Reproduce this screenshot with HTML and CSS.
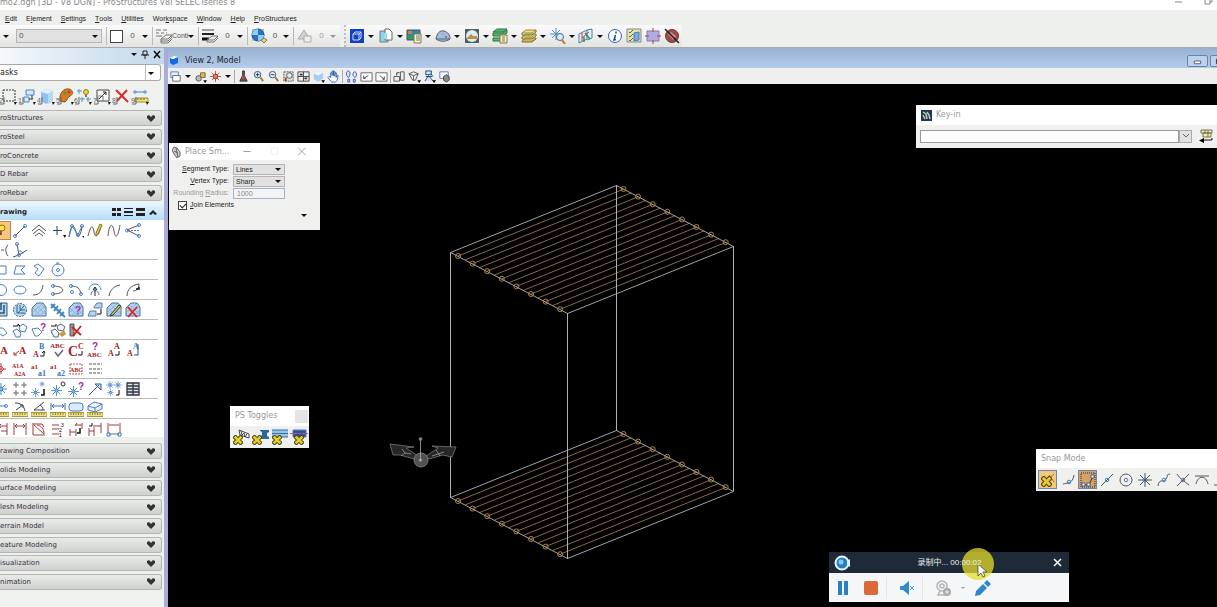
FILE: index.html
```html
<!DOCTYPE html>
<html lang="en">
<head>
<meta charset="utf-8">
<title>ProStructures</title>
<link rel="stylesheet" href="styles.css">
</head>
<body>
<svg class="defs" aria-hidden="true">
  <symbol id="chev" viewBox="0 0 8 7"><path d="M0 1l2-1 2 2 2-2 2 1v2l-4 4-4-4z" fill="#333"/></symbol>
  <symbol id="cross" viewBox="0 0 10 10"><path d="M2.500 2.500l5 5m0-5l-5 5" stroke="#4a4208" stroke-width="4.500" stroke-linecap="square"/><path d="M2.500 2.500l5 5m0-5l-5 5" stroke="#e3cb31" stroke-width="2.600" stroke-linecap="square"/></symbol>
  <symbol id="star" viewBox="0 0 12 12"><path d="M6 0v12M0 6h12M2 2l8 8m0-8l-8 8" stroke="#4a86c4" stroke-width="1"/><circle cx="6" cy="6" r="1.800" fill="#8cc4ee" stroke="#3a78b8"/></symbol>
  <symbol id="rule" viewBox="0 0 16 5"><path d="M0 .5h16v4H0z" fill="#efe08a" stroke="#a89630"/><path d="M3 1v2m2.500-2v2M8 1v2m2.500-2v2M13 1v2" stroke="#76691f" stroke-width=".8"/></symbol>
  <symbol id="patch" viewBox="0 0 16 16"><path d="M1 14V6l5-5h6l3 4v9z" fill="#b4d4ee" stroke="#446f9c"/><path d="M2 6l8 8M5 3l10 10M9 1l6 6M2 10l9-8M3 14L14 4M8 14l7-6" stroke="#83b0d8" stroke-width=".8"/></symbol>
  <symbol id="slab" viewBox="0 0 16 14"><path d="M1 4l4-3h10l-4 3zM1 8l4-3h10l-4 3zM1 12l4-3h10l-4 3z" fill="#efe08a" stroke="#a08d30"/><path d="M1 4v2h10l4-3V1M1 8v2h10l4-3V5M1 12v1h10l4-3V9" fill="none" stroke="#7c6a20"/></symbol>
</svg>

<header class="titlebar"><span>mo2.dgn [3D - V8 DGN] - ProStructures V8i SELECTseries 8</span><svg class="winctl" viewBox="0 0 40 10"><path d="M1 2h7M31 0v4h5V0M36 2h2V0" fill="none" stroke="#888"/></svg></header>
<nav class="menubar">
  <button><u>E</u>dit</button><button>E<u>l</u>ement</button><button><u>S</u>ettings</button><button><u>T</u>ools</button><button><u>U</u>tilities</button><button>Wor<u>k</u>space</button><button><u>W</u>indow</button><button><u>H</u>elp</button><button><u>P</u>roStructures</button>
</nav>

<div class="toolbar">
  <div class="attrs">
    <button class="first" aria-label="Template"><i class="ar"></i></button>
    <label class="combo level"><select aria-label="Level"><option>0</option></select></label>
    <button class="attr color"><span class="swatch"></span><span>0</span><i class="ar"></i></button>
    <button class="attr style"><svg class="i" viewBox="0 0 16 16"><path d="M0 2h5m2 0h4M0 5h3m2 0h3m2 0h1M0 8h6" stroke="#777"/><path d="M5 11l5-4h6l-4 4zM5 11v2h7l4-4V7" fill="#eee" stroke="#777"/><path d="M5 13v2h7l4-4" fill="none" stroke="#777"/></svg><span>Conti</span><i class="ar"></i></button>
    <button class="attr weight"><svg class="i" viewBox="0 0 16 16"><path d="M0 2h12" stroke="#444"/><path d="M0 6h12" stroke="#222" stroke-width="2"/><path d="M0 11h7" stroke="#111" stroke-width="3"/><path d="M5 12l5-4h6l-4 4zM5 12v2h7l4-4V8" fill="#eee" stroke="#777"/></svg><span>0</span><i class="ar"></i></button>
    <button class="attr globe"><svg class="i" viewBox="0 0 16 16"><path d="M1 1h12v12H1z" fill="#bbb"/><circle cx="7" cy="7" r="6" fill="#2c71c8" stroke="#244f91"/><path d="M7 1a6 6 0 0 0-6 6h6zM7 13a6 6 0 0 0 6-6H7z" fill="#8fd0f5"/><path d="M10 12l3-2 3 2-3 3z" fill="#e7d75c" stroke="#777"/></svg><span>0</span><i class="ar"></i></button>
    <button class="attr prio"><svg class="i" viewBox="0 0 16 16"><path d="M1 11l6-9 6 9z" fill="#d2d2d2" stroke="#aaa"/><path d="M7 8h7v6H7z" fill="#eee" stroke="#aaa"/></svg><span>0</span><i class="ar dim"></i></button>
  </div>
  <div class="primary">
    <div class="pairs">
      <button aria-label="Models"><svg class="i" viewBox="0 0 16 16"><path d="M1 1h14v14H1z" fill="#123fc4"/><path d="M4 6l2-2h6v6l-2 2H4zM4 6h6v6M10 6l2-2" fill="none" stroke="#cfe0ff"/></svg><i class="ar"></i></button>
      <button aria-label="References"><svg class="i" viewBox="0 0 16 16"><path d="M2 3h8v11H2z" fill="#8ed4e8" stroke="#777"/><path d="M7 1h4l3 3v8H7z" fill="#fff" stroke="#666"/><path d="M6 5h3v6H6z" fill="#9adcf0"/></svg><i class="ar"></i></button>
      <button aria-label="Raster manager"><svg class="i" viewBox="0 0 16 16"><path d="M1 2h13v10H1z" fill="#2389b5" stroke="#555"/><path d="M2 3h4v3H2z" fill="#e57a35"/><path d="M2 8h6v3H2z" fill="#33a04c"/><path d="M8 6h7v9H8z" fill="#fff3b8" stroke="#777"/><path d="M10 8h4m-4 2h4m-4 2h4" stroke="#777"/></svg><i class="ar"></i></button>
      <button aria-label="Point clouds"><svg class="i" viewBox="0 0 16 16"><path d="M1 11c1-6 4-9 8-8s6 4 6 8c-4 3-10 3-14 0z" fill="#98c4dc" stroke="#657"/><path d="M1 11h14" stroke="#567"/><circle cx="8" cy="6" r="1.500" fill="#e696b6"/><circle cx="11" cy="9" r="1" fill="#735cae"/></svg><i class="ar"></i></button>
      <button aria-label="Saved views"><svg class="i" viewBox="0 0 16 16"><path d="M1 1h14v14H1z" fill="#545e66"/><circle cx="8" cy="8" r="6" fill="#dcecf4"/><path d="M3 10l4-4 2 2h4v3H3z" fill="#c28c43"/></svg><i class="ar"></i></button>
      <button aria-label="Level manager"><svg class="i" viewBox="0 0 16 16"><path d="M1 4l4-3h10l-4 3zM1 5v3h10l4-3V2l-4 3zM1 10v3h8v-3z" fill="#58b966" stroke="#267548"/><path d="M8 7h7v8H8z" fill="#fff2aa" stroke="#776"/><path d="M10 9h3m-3 2h3m-3 2h3" stroke="#776"/></svg><i class="ar"></i></button>
      <button aria-label="Level display"><svg class="i" viewBox="0 0 16 14"><use href="#slab"/></svg><i class="ar"></i></button>
      <button aria-label="Element information"><svg class="i" viewBox="0 0 16 16"><path d="M6 0v12M0 6h12M2 2l8 8m0-8l-8 8" stroke="#4a90ce"/><circle cx="10" cy="9" r="3.500" fill="#d6efff" stroke="#567"/><path d="M12 12l3 4" stroke="#c07824" stroke-width="2"/></svg><i class="ar"></i></button>
      <button aria-label="AccuDraw"><svg class="i" viewBox="0 0 16 16"><path d="M1 6l8-4v9l-8 4zM9 2l5-1v9l-5 2" fill="#e4f1fb" stroke="#4d7bb5"/><path d="M4 13V5m0 5l7-6" stroke="#c33"/><path d="M7 5l5 6M6 9v5" stroke="#2c974a" stroke-width="1.500"/></svg><i class="ar"></i></button>
    </div>
    <div class="singles">
      <button aria-label="Information"><svg class="i" viewBox="0 0 16 16"><circle cx="8" cy="8" r="6.500" fill="#fff" stroke="#3266bb"/><path d="M9 3.500v2M8.500 7L7 12l2-.5" fill="none" stroke="#1648a5" stroke-width="1.500"/></svg></button>
      <button aria-label="Toggle"><svg class="i" viewBox="0 0 16 16"><path d="M1 1h14v13H1z" fill="#e7e0b8" stroke="#888"/><path d="M8 5l5-1v8l-5 1z" fill="#75a9e4" stroke="#5376ad"/><path d="M3 4l1 1 3-3M3 8l1 1 3-3M3 12l1 1 3-3" fill="none" stroke="#557427"/></svg></button>
      <button aria-label="Explorer"><svg class="i" viewBox="0 0 16 16"><path d="M2 3h12v10H2z" fill="#b7a9df" stroke="#7780b4"/><path d="M8 0v4M8 12v4M0 8h4M12 8h4" stroke="#d03030"/><path d="M5 5h6v6H5z" fill="#a9aee2"/></svg></button>
      <button aria-label="Stop"><svg class="i" viewBox="0 0 16 16"><circle cx="8" cy="8" r="6.500" fill="#a14848" stroke="#703535"/><path d="M4 6l3-2 5 4-3 4z" fill="#ca8e8e"/><path d="M1 1l14 14" stroke="#222" stroke-width="1.500"/></svg></button>
    </div>
  </div>
</div>

<main class="work">
<aside class="tasks">
  <div class="pane-title"><i class="ar"></i><svg viewBox="0 0 8 9"><path d="M2 1h4v4H2zM0 5h8M4 5v4" fill="none" stroke="#222"/></svg><svg viewBox="0 0 8 9"><path d="M1 1l6 7m0-7L1 8" stroke="#111" stroke-width="1.600"/></svg></div>
  <label class="task-combo"><select aria-label="Tasks"><option>asks</option></select></label>
  <div class="task-tools">
    <button aria-label="Select"><svg viewBox="0 0 18 18"><path d="M4 2h12v11H4z" fill="none" stroke="#333" stroke-dasharray="2 1"/><text x="0" y="15">2</text><path d="M5 9v7H1"/><path d="M15 14h3l-2 3z" fill="#111"/></svg></button>
    <button aria-label="Fence"><svg viewBox="0 0 18 18"><path d="M8 2h8v5H8zM6 9h5v5H6z" fill="#d3e9fb" stroke="#4888c8"/><path d="M14 7v4M11 11h4"  stroke="#333"/><text x="0" y="15">1</text><path d="M5 9v7H1"/><path d="M15 14h3l-2 3z" fill="#111"/></svg></button>
    <button aria-label="Solids"><svg viewBox="0 0 18 18"><path d="M4 4l5-3 7 2v10l-7 3-5-3z" fill="#8fc2ee"/><path d="M4 4l5-3 7 2-5 3z" fill="#dff0ff"/><path d="M11 6l5-3v10l-5 3z" fill="#b9d8f5"/><text x="0" y="15">4</text><path d="M5 9v7H1"/><path d="M15 14h3l-2 3z" fill="#111"/></svg></button>
    <button aria-label="Change attributes"><svg viewBox="0 0 18 18"><path d="M4 13C3 6 7 0 13 1c5 1 4 6 1 7s-2 4-5 6z" fill="#d77b21" stroke="#8b501a"/><circle cx="9" cy="5" r="1.500" fill="#46a04a"/><circle cx="13" cy="4" r="1.500" fill="#d33"/><text x="0" y="15">5</text><path d="M5 9v7H1"/><path d="M15 14h3l-2 3z" fill="#111"/></svg></button>
    <button aria-label="Groups"><svg viewBox="0 0 18 18"><path d="M5 1v5M3 3h5M8 9v5M6 11h5M14 9v5M12 11h5" stroke="#5a92cc"/><circle cx="12" cy="4" r="2.500" fill="#f0cc42" stroke="#9a7d25"/><path d="M11 7h2v2h-2z" fill="#777"/><text x="0" y="15">6</text><path d="M5 9v7H1"/><path d="M15 14h3l-2 3z" fill="#111"/></svg></button>
    <button aria-label="Manipulate"><svg viewBox="0 0 18 18"><path d="M4 2h12v11H4z" fill="#fff" stroke="#444"/><path d="M6 11l7-7M10 4h3v3" fill="none" stroke="#222"/><path d="M5 8h5v5" fill="none" stroke="#777"/><text x="0" y="15">7</text><path d="M5 9v7H1"/><path d="M15 14h3l-2 3z" fill="#111"/></svg></button>
    <button aria-label="Delete"><svg viewBox="0 0 18 18"><path d="M4 2l12 12M15 2L5 13" stroke="#d43028" stroke-width="2"/><text x="0" y="15">8</text><path d="M5 9v7H1"/></svg></button>
    <button aria-label="Measure"><svg viewBox="0 0 18 18"><path d="M5 4h10" stroke="#4c88c8"/><path d="M3 3h2v2H3zM13 3h2v2h-2z" fill="#fff" stroke="#4c88c8"/><path d="M4 10h13v4H4z" fill="#efdf7c" stroke="#a3922f"/><path d="M7 10v2m3-2v2m3-2v2" stroke="#665"/><text x="0" y="15">9</text><path d="M5 9v7H1"/><path d="M15 14h3l-2 3z" fill="#111"/></svg></button>
  </div>
  <div class="panels upper">
    <button class="panel">roStructures<svg><use href="#chev"/></svg></button>
    <button class="panel">roSteel<svg><use href="#chev"/></svg></button>
    <button class="panel">roConcrete<svg><use href="#chev"/></svg></button>
    <button class="panel">D Rebar<svg><use href="#chev"/></svg></button>
    <button class="panel">roRebar<svg><use href="#chev"/></svg></button>
  </div>
  <div class="drawing-head"><span>rawing</span><svg viewBox="0 0 46 10"><path d="M1 1h4v3H1zM6 1h4v3H6zM1 6h4v3H1zM6 6h4v3H6zM13 1h9v1h-9zM13 4h9v2h-9zM13 8h9v1h-9zM25 1h9v3h-9zM25 6h9v3h-9z" fill="#222"/><path d="M38 7l4-4 4 4-2 1-2-2-2 2z" fill="#222"/></svg></div>
  <div class="drawing-tools">
    <div class="grp">
      <button class="sel" aria-label="SmartLine"><svg viewBox="0 0 16 16"><circle cx="9" cy="5" r="3" fill="#ffe24a" stroke="#a67012"/><path d="M8 8v4M4 14l4-4" stroke="#644" stroke-width="1.500"/></svg></button>
      <button aria-label="Line"><svg viewBox="0 0 16 16"><path d="M3 13L13 3" class="k"/><circle cx="3" cy="13" r="1.500" class="b"/><circle cx="13" cy="3" r="1.500" class="b"/></svg></button>
      <button aria-label="Multi-line"><svg viewBox="0 0 16 16"><path d="M1 8l7-6 7 6M2 11l6-5 6 5M4 13l4-3 4 3" class="k"/></svg></button>
      <button aria-label="Point"><svg viewBox="0 0 16 16"><path d="M7 3v9M3 7.500h9" stroke="#246"/><path d="M13 12h3l-1 3z"/></svg></button>
      <button aria-label="Curve"><svg viewBox="0 0 16 16"><path d="M1 14C3 0 6 1 8 9s5 3 6-6" class="k"/><path d="M1 14L4 3l6 9 4-9" class="b"/><circle cx="4" cy="3" r="1.500" class="b"/><circle cx="14" cy="3" r="1.500" class="b"/><circle cx="10" cy="12" r="1.500" class="b"/><path d="M14 13h2v2z"/></svg></button>
      <button aria-label="Freehand"><svg viewBox="0 0 16 16"><path d="M1 13C4 1 6 2 7 9s5 4 7-6" class="k"/><path d="M9 10l4-9 2 1-4 9-2 2z" fill="#efcf4a" stroke="#886b20"/></svg></button>
      <button aria-label="Stream curve"><svg viewBox="0 0 16 16"><path d="M2 13C3 0 7 0 8 8s4 7 6-6" class="k"/></svg></button>
      <button aria-label="Bisector"><svg viewBox="0 0 16 16"><path d="M14 2L2 7l12 6" class="k"/><path d="M3 7.500h12" class="b" stroke-dasharray="2 1"/><circle cx="2" cy="7.500" r="1.500" class="b"/><circle cx="14" cy="2" r="1.500" class="b"/><circle cx="14" cy="13" r="1.500" class="b"/></svg></button>
      <button aria-label="Minimum line"><svg viewBox="0 0 16 16"><path d="M8 8h3M15 3c-3 3-3 7 0 11" class="k"/></svg></button>
      <button aria-label="Angle line"><svg viewBox="0 0 16 16"><path d="M5 2l2 11 8-5M1 15l6-2" class="k"/><path d="M7 9c3 0 3 1 4 3" class="b"/><circle cx="5" cy="2" r="1.500" class="b"/><circle cx="7" cy="13" r="1.500" class="b"/></svg></button>
    </div>
    <div class="grp">
      <button aria-label="Block"><svg viewBox="0 0 16 16"><path d="M1 4h12v8H1z" class="b"/></svg></button>
      <button aria-label="Shape"><svg viewBox="0 0 16 16"><path d="M2 12l2-8h9l-4 4 4 4z" class="b"/></svg></button>
      <button aria-label="Orthogonal shape"><svg viewBox="0 0 16 16"><path d="M3 4l4-2 6 5-5 7-4-3 3-4z" class="b"/></svg></button>
      <button aria-label="Polygon"><svg viewBox="0 0 16 16"><circle cx="8" cy="8" r="6" class="b"/><circle cx="8" cy="8" r="1.500" class="b"/><path d="M6 1h3" class="b"/></svg></button>
    </div>
    <div class="grp">
      <button aria-label="Circle"><svg viewBox="0 0 16 16"><circle cx="8" cy="8" r="5.500" class="b"/></svg></button>
      <button aria-label="Ellipse"><svg viewBox="0 0 16 16"><ellipse cx="8" cy="8" rx="6" ry="4" class="b"/></svg></button>
      <button aria-label="Arc"><svg viewBox="0 0 16 16"><path d="M2 13c6 0 9-3 10-10" class="k"/></svg></button>
      <button aria-label="Half ellipse"><svg viewBox="0 0 16 16"><path d="M3 4c13 0 13 8 0 8" class="k"/><circle cx="3" cy="4" r="1.500" class="b"/><circle cx="3" cy="12" r="1.500" class="b"/></svg></button>
      <button aria-label="Quarter ellipse"><svg viewBox="0 0 16 16"><path d="M3 4c7 0 9 3 10 8" class="k"/><circle cx="3" cy="4" r="1.500" class="b"/><circle cx="13" cy="12" r="1.500" class="b"/><circle cx="4" cy="10" r="1.500" class="b"/></svg></button>
      <button aria-label="Modify arc radius"><svg viewBox="0 0 16 16"><path d="M2 8c1-8 11-8 12 0M4 13c0-6 8-6 8 0" class="b"/><path d="M8 14V6M6 8l2-3 2 3" fill="none" stroke="#222"/></svg></button>
      <button aria-label="Modify arc angle"><svg viewBox="0 0 16 16"><path d="M3 14C4 8 8 4 14 3" class="k"/></svg></button>
      <button aria-label="Modify arc axis"><svg viewBox="0 0 16 16"><path d="M2 14C2 8 6 3 14 2c0 5-3 7-6 7" class="k"/><path d="M11 7h3V5" fill="none" stroke="#111" stroke-width="1.500"/></svg></button>
    </div>
    <div class="grp">
      <button aria-label="Hatch"><svg viewBox="0 0 16 16"><path d="M1 1h13v13H1z" fill="#b9d8f0" stroke="#28557b"/><path d="M4 1v10h7V3M8 1v7" fill="none" stroke="#28557b" stroke-width="1.500"/></svg></button>
      <button aria-label="Crosshatch"><svg viewBox="0 0 16 16"><circle cx="8" cy="8" r="6.500" fill="#bad8ee" stroke="#2b6192" stroke-dasharray="2 1"/><path d="M5 3v8h8M8 3v5h5M6 11l6-7" fill="none" stroke="#2b6192"/></svg></button>
      <button aria-label="Pattern area"><svg><use href="#patch"/></svg></button>
      <button aria-label="Linear pattern"><svg viewBox="0 0 16 16"><path d="M1 2l14 13M1 6l4-4M4 9l4-5M7 12l4-5M10 14l4-4" stroke="#4387bf" stroke-width="2"/></svg></button>
      <button aria-label="Show pattern"><svg viewBox="0 0 16 16"><use href="#patch"/><text x="7" y="12" class="q">?</text></svg></button>
      <button aria-label="Match pattern"><svg viewBox="0 0 16 16"><path d="M7 5l3-4h5v5H7zM1 14l2-5h6v5z" fill="#b8d3ec" stroke="#557ea8"/><path d="M14 7v5h-4" fill="none" stroke="#111"/></svg></button>
      <button aria-label="Change pattern"><svg viewBox="0 0 16 16"><use href="#patch"/><path d="M5 12l8-9 2 1-8 9-3 1z" fill="#dfc45d" stroke="#333"/></svg></button>
      <button aria-label="Delete pattern"><svg viewBox="0 0 16 16"><use href="#patch"/><path d="M3 5l9 10M12 5L3 15" stroke="#d22" stroke-width="1.800"/></svg></button>
    </div>
    <div class="grp">
      <button aria-label="Place tag"><svg viewBox="0 0 16 16"><path d="M4 6h6l4 5-4 3-6-4z" class="b"/></svg></button>
      <button aria-label="Attach tag"><svg viewBox="0 0 16 16"><path d="M1 9l4-2 4 4-1 4H4zM7 5l4-3 4 3-2 5-5-1z" fill="#eef7ff" stroke="#567ba5"/><path d="M1 4h5V2l2 2" fill="none" stroke="#111"/></svg></button>
      <button aria-label="Review tag"><svg viewBox="0 0 16 16"><path d="M1 7l6-1 4 4-4 4H4z" class="b"/><text x="9" y="9" class="q">?</text></svg></button>
      <button aria-label="Change tag"><svg viewBox="0 0 16 16"><path d="M1 9l4-2 4 4-1 4H4zM7 4l4-2 4 3-2 4-5-1z" fill="#eef7ff" stroke="#567"/><path d="M9 12l5-4 2 4-4 3z" fill="#c49b43"/><path d="M1 4h5V2" fill="none" stroke="#111"/></svg></button>
      <button aria-label="Delete tag"><svg viewBox="0 0 16 16"><path d="M2 2h4v12H2z" fill="#999" stroke="#555"/><path d="M4 5l9 8M13 4L5 14" stroke="#c22" stroke-width="1.800"/></svg></button>
    </div>
    <div class="grp">
      <button aria-label="Place text"><svg viewBox="0 0 16 16"><text x="7" y="12" class="tx" font-size="11">A</text></svg></button>
      <button aria-label="Place note"><svg viewBox="0 0 16 16"><path d="M7 9l-5 4m0-3v3h3" fill="none" stroke="#a33"/><text x="7" y="12" class="tx" font-size="10">A</text></svg></button>
      <button aria-label="Edit text"><svg viewBox="0 0 16 16"><text x="2" y="15" class="tx" font-size="8">A</text><text x="8" y="7" class="bl" font-size="8">B</text><path d="M9 14h4V9m-2 2l2-2 1 2" fill="none" stroke="#222"/></svg></button>
      <button aria-label="Spell checker"><svg viewBox="0 0 16 16"><text x="0" y="6" class="tx" font-size="7">ABC</text><path d="M5 10l3 4 5-6" fill="none" stroke="#667" stroke-width="1.500"/></svg></button>
      <button aria-label="Change case"><svg viewBox="0 0 16 16"><text x="0" y="14" class="tx" font-size="14">C</text><text x="10" y="7" class="tx" font-size="8">C</text><path d="M10 13h4V9" fill="none" stroke="#111"/></svg></button>
      <button aria-label="Display text attributes"><svg viewBox="0 0 16 16"><text x="0" y="15" class="tx" font-size="7">ABC</text><text x="5" y="8" class="q">?</text></svg></button>
      <button aria-label="Match text"><svg viewBox="0 0 16 16"><text x="2" y="14" class="tx" font-size="8">A</text><text x="8" y="7" class="tx" font-size="8">A</text><path d="M9 13h4V9" fill="none" stroke="#111"/></svg></button>
      <button aria-label="Change text"><svg viewBox="0 0 16 16"><text x="2" y="14" class="tx" font-size="8">A</text><text x="8" y="7" class="bl" font-size="8">A</text><path d="M9 13h4V2" fill="none" stroke="#347"/></svg></button>
      <button aria-label="Text node"><svg viewBox="0 0 16 16"><path d="M8 2v11M4 8h9M5 8l3-3 3 3-3 3z" fill="none" stroke="#b44"/></svg></button>
      <button aria-label="Copy and increment"><svg viewBox="0 0 16 16"><text x="0" y="7" class="tx" font-size="6">A1A</text><text x="2" y="15" class="tx" font-size="6">A2A</text></svg></button>
      <button aria-label="Copy data field"><svg viewBox="0 0 16 16"><text x="0" y="8" class="tx" font-size="7">a1</text><text x="7" y="15" class="bl" font-size="8">a1</text></svg></button>
      <button aria-label="Increment data field"><svg viewBox="0 0 16 16"><text x="0" y="8" class="tx" font-size="7">a1</text><text x="7" y="15" class="bl" font-size="8">a2</text></svg></button>
      <button aria-label="Fill data field"><svg viewBox="0 0 16 16"><path d="M2 3h12v10H2z" fill="#fff" stroke="#a55" stroke-dasharray="2 1"/><text x="2" y="11" class="tx" font-size="6">ABC</text></svg></button>
      <button aria-label="Auto fill"><svg viewBox="0 0 16 16"><path d="M2 3h13M2 8h13M2 12h13" stroke="#555" stroke-dasharray="3 1"/></svg></button>
    </div>
    <div class="grp">
      <button aria-label="Place cell"><svg viewBox="0 0 16 16"><svg x="2" y="2" width="12" height="12"><use href="#star"/></svg></svg></button>
      <button aria-label="Cell matrix"><svg viewBox="0 0 16 16"><path d="M4 1v6M1 4h6M12 1v6M9 4h6M4 9v6M1 12h6M12 9v6M9 12h6" stroke="#888"/><path d="M3 3h2v2H3zM11 3h2v2h-2zM3 11h2v2H3zM11 11h2v2h-2z" fill="#d9c08e" stroke="#888"/></svg></button>
      <button aria-label="Select cell"><svg viewBox="0 0 16 16"><svg x="0" y="7" width="9" height="9"><use href="#star"/></svg><svg x="8" y="0" width="6" height="6"><use href="#star"/></svg><path d="M10 14h3V8" fill="none" stroke="#111" stroke-width="1.500"/></svg></button>
      <button aria-label="Define origin"><svg viewBox="0 0 16 16"><svg x="1" y="4" width="11" height="11"><use href="#star"/></svg><circle cx="13" cy="3" r="2" fill="none" stroke="#333"/></svg></button>
      <button aria-label="Identify cell"><svg viewBox="0 0 16 16"><svg x="0" y="5" width="11" height="11"><use href="#star"/></svg><text x="10" y="9" class="q">?</text></svg></button>
      <button aria-label="Place line terminator"><svg viewBox="0 0 16 16"><path d="M2 14L12 4M8 3h6v6z" fill="#c9e2f6" stroke="#345d86"/></svg></button>
      <button aria-label="Replace cells"><svg viewBox="0 0 16 16"><svg x="0" y="0" width="8" height="8"><use href="#star"/></svg><svg x="8" y="0" width="8" height="8"><use href="#star"/></svg><svg x="1" y="8" width="7" height="7"><use href="#star"/></svg><path d="M10 14h3V9" fill="none" stroke="#111"/></svg></button>
      <button aria-label="Table"><svg viewBox="0 0 16 16"><path d="M2 2h12v12H2zM8 2v12M2 5h12M2 8h12M2 11h12" fill="#dde4ec" stroke="#334" stroke-width="1.300"/></svg></button>
    </div>
    <div class="grp">
      <button aria-label="Measure distance"><svg viewBox="0 0 16 16"><path d="M6 5h7" class="b"/><circle cx="13" cy="5" r="1.500" class="b"/><svg y="11" width="16" height="5"><use href="#rule"/></svg></svg></button>
      <button aria-label="Measure radius"><svg viewBox="0 0 16 16"><path d="M3 2c6 0 9 3 10 8M4 9l7-5M8 4h3v3" fill="none" stroke="#345"/><svg y="11" width="16" height="5"><use href="#rule"/></svg></svg></button>
      <button aria-label="Measure angle"><svg viewBox="0 0 16 16"><path d="M13 1L3 9h11M9 4c2 1 3 3 3 5" fill="none" stroke="#444"/><svg y="11" width="16" height="5"><use href="#rule"/></svg></svg></button>
      <button aria-label="Measure length"><svg viewBox="0 0 16 16"><path d="M1 2v7M15 2v7M2 5h12M4 3L2 5l2 2M12 3l2 2-2 2" fill="none" stroke="#3d6ea8"/><svg y="11" width="16" height="5"><use href="#rule"/></svg></svg></button>
      <button aria-label="Measure area"><svg viewBox="0 0 16 16"><rect x="1" y="2" width="14" height="8" rx="3" fill="#dcebfc" stroke="#4b7bbb"/><svg y="11" width="16" height="5"><use href="#rule"/></svg></svg></button>
      <button aria-label="Measure volume"><svg viewBox="0 0 16 16"><path d="M1 5l6-4 8 2v5l-7 3-7-2zM1 5l7 2 7-4M8 7v4" fill="#eaf3fc" stroke="#4b7bbb"/><svg y="11" width="16" height="5"><use href="#rule"/></svg></svg></button>
    </div>
    <div class="grp">
      <button aria-label="Dimension element"><svg viewBox="0 0 16 16"><path d="M14 2v12M6 5h8M8 3L6 5l2 2M8 10h6" class="r"/></svg></button>
      <button aria-label="Dimension linear"><svg viewBox="0 0 16 16"><path d="M2 2v12M14 2v12M3 5h10M5 3L3 5l2 2M11 3l2 2-2 2" class="r"/></svg></button>
      <button aria-label="Dimension angular"><svg viewBox="0 0 16 16"><path d="M2 2v12h12M2 3h9l2 3M3 4l10 9M6 4c5 1 7 4 7 9" class="r"/></svg></button>
      <button aria-label="Dimension ordinate"><svg viewBox="0 0 16 16"><path d="M2 4h7M2 8h7M2 13h7" class="r"/><text x="11" y="6" font-size="5">3</text><text x="9" y="11" font-size="5">2</text><text x="9" y="16" font-size="5">1</text></svg></button>
      <button aria-label="Change dimension"><svg viewBox="0 0 16 16"><path d="M2 8v7M2 11h6v4M8 8v3M14 2v6M7 4h7M9 2L7 5" class="r"/><path d="M9 12h3V7" fill="none" stroke="#111" stroke-width="1.500"/></svg></button>
      <button aria-label="Label line"><svg viewBox="0 0 16 16"><path d="M2 7v8M2 10h5M7 4v11M14 2v10M8 5h6" class="r"/><path d="M2 5h3V2" fill="none" stroke="#111"/></svg></button>
      <button aria-label="Dimension size"><svg viewBox="0 0 16 16"><path d="M2 2v12M14 2v12M3 4h10" class="r"/><path d="M3 13h10M1 12h3v3H1zM12 12h3v3h-3z" fill="#fff" stroke="#47a"/></svg></button>
    </div>
  </div>
  <div class="panels lower">
    <button class="panel">rawing Composition<svg><use href="#chev"/></svg></button>
    <button class="panel">olids Modeling<svg><use href="#chev"/></svg></button>
    <button class="panel">urface Modeling<svg><use href="#chev"/></svg></button>
    <button class="panel">lesh Modeling<svg><use href="#chev"/></svg></button>
    <button class="panel">errain Model<svg><use href="#chev"/></svg></button>
    <button class="panel">eature Modeling<svg><use href="#chev"/></svg></button>
    <button class="panel">isualization<svg><use href="#chev"/></svg></button>
    <button class="panel">nimation<svg><use href="#chev"/></svg></button>
  </div>
</aside>

<section class="view">
  <div class="view-title"><svg viewBox="0 0 8 9"><path d="M0 2l3 1v6L0 7zM3 3l5-2v6L3 9z" fill="#126be0"/><path d="M0 2l4-2 4 1-5 2z" fill="#fff"/></svg><span>View 2, Model</span><div class="capt"><button aria-label="Minimize"><svg viewBox="0 0 21 12"><path d="M7 6h7v3H7z" fill="#fff" stroke="#556"/></svg></button><button aria-label="Restore"><svg viewBox="0 0 21 12"><path d="M6 4h7v5H6z" fill="#fff" stroke="#223"/></svg></button></div></div>
  <div class="view-tools">
    <button aria-label="View attributes"><svg viewBox="0 0 14 14"><path d="M2 2h8v6H2z" class="b"/><path d="M4 6h8v6H4z" fill="#fff" stroke="#666"/></svg></button><button class="nar" aria-label="View attribute options"><i class="ar"></i></button>
    <button aria-label="Display style"><svg viewBox="0 0 14 14"><circle cx="5" cy="9" r="3" fill="#bbb" stroke="#555"/><path d="M7 3h5v5H7z" fill="#ddb93c" stroke="#765"/><path d="M10 11h4l-2 3z"/></svg></button>
    <button aria-label="Adjust brightness"><svg viewBox="0 0 14 14"><path d="M7 1v12M1 7h12M3 3l8 8M11 3l-8 8" stroke="#a55"/><circle cx="7" cy="7" r="2.500" fill="#f27250" stroke="#a33"/></svg></button><button class="nar" aria-label="Brightness options"><i class="ar"></i></button>
    <hr>
    <button aria-label="Update view"><svg viewBox="0 0 14 14"><path d="M6 1h2v5l3 6H3l3-6z" fill="#655" stroke="#433"/><path d="M5 8h4" stroke="#d44" stroke-width="2"/></svg></button>
    <button aria-label="Zoom in"><svg viewBox="0 0 14 14"><circle cx="6" cy="5" r="3.500" fill="#dceeff" stroke="#456"/><path d="M6 3v4M4 5h4" stroke="#237"/><path d="M9 8l3 4" stroke="#a73" stroke-width="2"/></svg></button>
    <button aria-label="Zoom out"><svg viewBox="0 0 14 14"><circle cx="6" cy="5" r="3.500" fill="#dceeff" stroke="#456"/><path d="M4 5h4" stroke="#237"/><path d="M9 8l3 4" stroke="#a73" stroke-width="2"/></svg></button>
    <button aria-label="Window area"><svg viewBox="0 0 14 14"><path d="M2 2h10v10H2z" fill="#e9e2c7" stroke="#555" stroke-dasharray="2 1"/><circle cx="8" cy="6" r="3" fill="#dceeff" stroke="#456"/><path d="M4 8v4" stroke="#844" stroke-width="2"/></svg></button>
    <button aria-label="Fit view"><svg viewBox="0 0 14 14"><path d="M1 2h12v10H1zM7 2v10M1 7h12" fill="#eee" stroke="#444"/><path d="M3 5h3M8 9h3" stroke="#333" stroke-width="2"/></svg></button>
    <button aria-label="Rotate view"><svg viewBox="0 0 14 14"><path d="M2 4l5-3 5 2v6l-5 4-5-3z" fill="#a9cdf0"/><path d="M2 4l5-3 5 2-5 3z" fill="#e9f4ff"/><path d="M10 11h4l-2 3z"/></svg></button>
    <button aria-label="Pan view"><svg viewBox="0 0 14 14"><path d="M4 12L1 8l1-1 2 1V3h1.500v3-5H7v5-4.500h1.500V7 3H10v5l1-2h1l-1 5-2 2H5z" fill="#fff" stroke="#36a"/></svg></button>
    <hr>
    <button aria-label="Walk"><svg viewBox="0 0 14 14"><path d="M3 1c3 0 3 4 1 7C1 7 1 2 3 1zM3 10h2v3H3zM10 2c3 0 3 4 1 6-3-1-3-5-1-6zM9 10h2v3H9z" fill="#dce8fb" stroke="#35b"/></svg></button>
    <button aria-label="View previous"><svg viewBox="0 0 14 14"><path d="M1 3h12v9H1z" fill="#fff" stroke="#666"/><path d="M4 6v3h2M4 9l5-3" fill="none" stroke="#444"/></svg></button>
    <button aria-label="View next"><svg viewBox="0 0 14 14"><path d="M1 3h12v9H1z" fill="#fff" stroke="#666"/><path d="M10 7v3H8M10 10L5 6" fill="none" stroke="#444"/></svg></button>
    <hr>
    <button aria-label="Copy view"><svg viewBox="0 0 14 14"><path d="M1 7h6v5H1zM8 2h4v9H8z" fill="#eee" stroke="#555"/><path d="M4 6V3h3" fill="none" stroke="#333"/></svg></button>
    <button aria-label="Clip volume"><svg viewBox="0 0 14 14"><path d="M1 4l5-2 5 2-3 7H5zM1 4l5 2 5-2M6 6v5" fill="#eee" stroke="#555"/><path d="M10 11h4l-2 3z"/></svg></button>
    <button aria-label="Clip mask"><svg viewBox="0 0 14 14"><path d="M3 1h6v4H3zM3 7h7M2 12l4-6 5 6M8 4l3 3" fill="#cfe2fa" stroke="#247"/><path d="M10 11h4l-2 3z"/></svg></button>
    <button aria-label="Clip options"><svg viewBox="0 0 14 14"><path d="M2 2h9v7H2z" fill="#fff" stroke="#57b"/><path d="M6 7l3-2 3 2v4l-3 2-3-2z" fill="#888" stroke="#445"/></svg></button>
  </div>
  <div class="canvas">
    <svg class="scene" viewBox="168 84 1049 523" width="1049" height="523">
      <defs>
        <g id="plate">
          <path d="M458 256l166-67m-158.700 70.800l166-67m-158.700 70.800l166-67m-158.700 70.800l166-67m-158.700 70.800l166-67m-158.700 70.800l166-67m-158.700 70.800l166-67m-158.700 70.800l166-67m-158.700 70.800l166-67m-158.700 70.800l166-67m-158.700 70.800l166-67m-158.700 70.800l166-67m-158.700 70.800l166-67m-158.700 70.800l166-67m-158.700 70.800l166-67" stroke="#9c7448" fill="none" stroke-width=".9"/>
          <path d="M450.500 252.500l166-67 117 61-166 67z" stroke="#b4b4b4" fill="none" stroke-width=".9"/>
          <g fill="none" stroke="#b08743"><g id="bars"><circle cx="458" cy="256" r="2.500"/><circle cx="472.600" cy="263.600" r="2.500"/><circle cx="487.200" cy="271.200" r="2.500"/><circle cx="501.800" cy="278.800" r="2.500"/><circle cx="516.400" cy="286.400" r="2.500"/><circle cx="531" cy="294" r="2.500"/><circle cx="545.600" cy="301.600" r="2.500"/><circle cx="560.200" cy="309.200" r="2.500"/></g><use href="#bars" x="165.500" y="-67"/></g>
        </g>
      </defs>
      <use href="#plate"/><use href="#plate" y="245"/>
      <path d="M450.500 252v246M567.500 313v246M616.500 185v246M733.500 246v245" stroke="#b0b0b0" stroke-width="1"/>
      <g fill="#262828" stroke="#777" stroke-width=".8"><path d="M390 444l24 3-8 1 12 8-4 3-14-4-7 0zM456 447l-24-1 6 2-12 8 3 3 14-4 9 2z"/><path d="M402 449l3 4 6 1m-6-1l-4 3M432 456l12-4m-8-2l4 6" stroke="#999"/><circle cx="421" cy="460" r="7" fill="#505252" stroke="#888"/><path d="M420.500 460v-21" stroke="#aaa"/><circle cx="420.500" cy="439" r="1.500" fill="#888"/><circle cx="420.500" cy="460" r="1.500" fill="#bbb"/></g>
    </svg>

    <form class="dlg place">
      <div class="dlg-title"><svg viewBox="0 0 9 12"><path d="M2 1l3 1 3 4v4l-3 2-3-4-2-4zM2 5l4 2M4 2l2 9" fill="#ccc" stroke="#666"/></svg><span>Place Sm...</span><svg class="win3" viewBox="0 0 70 10"><path d="M1 5h8M62 1l8 8m0-8l-8 8" stroke="#999" fill="none"/><path d="M32 1h7v7h-7z" fill="none" stroke="#eee"/></svg></div>
      <div class="fields">
        <label for="seg"><u>S</u>egment Type:</label><span class="combo"><select id="seg"><option>Lines</option></select></span>
        <label for="ver"><u>V</u>ertex Type:</label><span class="combo"><select id="ver"><option>Sharp</option></select></span>
        <label for="rad" class="off">Rounding <u>R</u>adius:</label><input id="rad" value="1000" disabled>
      </div>
      <label class="join"><input type="checkbox" checked><span><u>J</u>oin Elements</span></label>
      <button type="button" class="more" aria-label="More"><i class="ar"></i></button>
    </form>

    <div class="dlg keyin">
      <div class="dlg-title"><svg viewBox="0 0 11 11"><path d="M0 0h11v11H0z" fill="#1f3850"/><path d="M2 2l3 2 1 5M6 2l2 3 1 4M2 5l2 4" fill="none" stroke="#b8d0b0" stroke-width="1.500"/></svg><span>Key-in</span></div>
      <div class="keyrow"><input aria-label="Key-in"><button class="drop" aria-label="History"><svg viewBox="0 0 8 8"><path d="M1 2l3 3 3-3" fill="none" stroke="#666"/></svg></button><button class="enter" aria-label="Browse"><svg viewBox="0 0 14 14"><path d="M2 1h11v3H2zM4 4h8v4H4zM6 1v3m3-3v7" fill="#f3edb6" stroke="#777550"/><path d="M13 9v2H3" fill="none" stroke="#111"/><path d="M0 11.500L5 9v5z"/></svg></button></div>
    </div>

    <div class="dlg toggles">
      <div class="dlg-title"><span>PS Toggles</span><button class="x" aria-label="Close"></button></div>
      <div class="tog-row">
        <button aria-label="Shape toggle"><svg viewBox="0 0 18 16"><path d="M6 1l10 4v4L7 6zM8 2l1 4 2-2 1 4 2-3" fill="#fff" stroke="#445"/><svg y="6" width="10" height="10"><use href="#cross"/></svg></svg></button>
        <button aria-label="Connection toggle"><svg viewBox="0 0 18 16"><path d="M8 1h9v2l-2 1v3l2 1v2H8V8l2-2V3L8 2z" fill="#27689f"/><svg y="6" width="10" height="10"><use href="#cross"/></svg></svg></button>
        <button aria-label="Plate toggle"><svg viewBox="0 0 18 16"><path d="M1 1h16v7H1z" fill="#96c5ec"/><path d="M1 1h16M1 4.500h16M1 8h16" stroke="#376e9d"/><svg y="6" x="1" width="10" height="10"><use href="#cross"/></svg></svg></button>
        <button aria-label="Centerline toggle"><svg viewBox="0 0 18 16"><path d="M3 1h13v7H3z" fill="#334fa8" stroke="#567cb6"/><path d="M0 4.500h18" stroke="#b45b80" stroke-dasharray="3 1"/><svg y="6" x="4" width="10" height="10"><use href="#cross"/></svg></svg></button>
      </div>
    </div>

    <div class="dlg snap">
      <div class="dlg-title"><span>Snap Mode</span></div>
      <div class="snap-row">
        <button class="sel" aria-label="AccuSnap"><svg viewBox="0 0 16 16"><path d="M8 7l6-5M9 3l5 7" stroke="#777"/><svg x="1" y="4" width="11" height="11"><use href="#cross"/></svg></svg></button>
        <hr>
        <button aria-label="Near"><svg viewBox="0 0 16 16"><path d="M2 12c3-1 10 0 11-9" class="k"/><circle cx="8" cy="10" r="1.800" class="b"/></svg></button>
        <button class="sel dark" aria-label="Keypoint"><svg viewBox="0 0 16 16"><path d="M1 1h14v14H1z" fill="none" stroke="#765" stroke-dasharray="1 1" stroke-width="2"/><path d="M3 13h6l4-9" stroke="#333" fill="none"/><path d="M2 11h3v3H2zM7 11h3v3H7zM11 3h3v3h-3z" fill="#fff" stroke="#36a"/></svg></button>
        <button aria-label="Midpoint"><svg viewBox="0 0 16 16"><path d="M2 14L14 2" class="k"/><circle cx="8" cy="8" r="1.800" class="b"/></svg></button>
        <button aria-label="Center"><svg viewBox="0 0 16 16"><circle cx="8" cy="8" r="6" class="k"/><circle cx="8" cy="8" r="1.800" class="b"/></svg></button>
        <button aria-label="Origin"><svg viewBox="0 0 16 16"><path d="M8 1v14M1 8h14M3 3l10 10M13 3L3 13" class="k"/><circle cx="8" cy="8" r="2" class="b"/></svg></button>
        <button aria-label="Bisector"><svg viewBox="0 0 16 16"><path d="M2 14c1-8 5-3 8-7s-1-4 4-5" class="k"/><circle cx="8" cy="8" r="1.800" class="b"/></svg></button>
        <button aria-label="Intersection"><svg viewBox="0 0 16 16"><path d="M2 2c3 5 7 7 12 11M14 2L2 14" class="k"/><circle cx="8" cy="8" r="1.800" class="b"/></svg></button>
        <button aria-label="Tangent"><svg viewBox="0 0 16 16"><path d="M1 4h14M2 12c2-9 10-9 12 0" class="k"/></svg></button>
        <button aria-label="Perpendicular"><svg viewBox="0 0 16 16"><path d="M1 13h14M8 3v10" class="k"/></svg></button>
      </div>
    </div>

    <div class="rec">
      <div class="rec-title"><svg viewBox="0 0 18 16"><circle cx="8" cy="8" r="6.500" fill="#2380c8" stroke="#edf6fc" stroke-width="2"/><path d="M13 6l3-2v8l-3-2z" fill="#dceefa"/><circle cx="7" cy="7" r="2.500" fill="#8ccbf3"/></svg><span>录制中... 00:00:02</span><button aria-label="Close"><svg viewBox="0 0 9 9"><path d="M1 1l7 7m0-7L1 8" stroke="#fff" stroke-width="1.500"/></svg></button></div>
      <div class="rec-row">
        <button aria-label="Pause"><svg viewBox="0 0 18 18"><path d="M4 2h4v14H4zM10 2h4v14h-4z" fill="#297fc5"/></svg></button>
        <button aria-label="Stop"><svg viewBox="0 0 18 18"><rect x="2" y="2" width="14" height="14" rx="2" fill="#dc6738"/></svg></button>
        <hr>
        <button aria-label="Mute"><svg viewBox="0 0 18 18"><path d="M2 7h3l6-5v14l-6-5H2z" fill="#2d8ccc"/><path d="M12 7l4 4m0-4l-4 4" stroke="#4a9bd2"/></svg></button>
        <hr>
        <button aria-label="Camera"><svg viewBox="0 0 18 18"><g fill="none" stroke="#b5b5b5" stroke-width="1.600"><circle cx="8" cy="7" r="5"/><circle cx="8" cy="7" r="2"/><path d="M6 12l-2 4h8"/></g><circle cx="13" cy="13" r="4" fill="#aaa"/><path d="M13 11v4m-2-2h4" stroke="#eee"/></svg></button>
        <button class="nar" aria-label="Camera options"><i class="ar dim"></i></button>
        <button aria-label="Draw"><svg viewBox="0 0 18 18"><path d="M2 12l7-7 4 4-7 7-5 1zM10 4l3-3 4 4-3 3z" fill="#2d87ca"/></svg></button>
      </div>
      <svg class="pointer" viewBox="0 0 34 34"><circle cx="17" cy="17" r="16" fill="#e3dc2a" fill-opacity=".75"/><path d="M17 17v12l3-3 2 4 2-1-2-4h4z" fill="#fff" stroke="#443" stroke-width=".8"/></svg>
    </div>
  </div>
</section>
</main>
</body>
</html>
```

FILE: styles.css
```css
* { box-sizing: border-box; }
body {
  margin: 0; min-height: 100vh; overflow: hidden;
  display: flex; flex-direction: column;
  background: #eef0ed; color: #222;
  font: 7px/10px "Liberation Sans", Arial, sans-serif;
}
button {
  border: 0; margin: 0; padding: 0; background: none; color: inherit; font: inherit;
  display: flex; align-items: center; justify-content: center; flex: none;
}
input, select { font: inherit; color: inherit; border: 0; margin: 0; padding: 0; background: none; appearance: none; border-radius: 0; }
svg { display: block; flex: none; }
.defs { position: absolute; width: 0; height: 0; }
.k { fill: none; stroke: #555; }
.b { fill: none; stroke: #4a7fc8; }
.r { fill: none; stroke: #a33c3c; }
.q { font: bold 10px "Liberation Sans", sans-serif; fill: #a02fa8; }
.tx { font-family: "Liberation Serif", serif; font-weight: bold; fill: #a32626; }
.bl { font-family: "Liberation Serif", serif; font-weight: bold; fill: #3478bd; }
.ar { width: 0; height: 0; border: 3px solid transparent; border-top-color: #111; border-bottom: 0; }
.ar.dim { border-top-color: #999; }
.i { width: 16px; height: 16px; }

.titlebar {
  height: 10px; flex: none; background: #fff; color: #888;
  display: flex; justify-content: space-between; align-items: flex-start;
  font: 8px/8px "DejaVu Sans", sans-serif;
}
.titlebar span { margin-top: -1px; white-space: nowrap; }
.winctl { width: 40px; height: 10px; margin-right: 3px; }
.menubar { height: 15px; flex: none; display: flex; align-items: center; gap: 9px; padding: 2px 0 0 5px; }

.toolbar { height: 23px; flex: none; display: flex; gap: 4px; border-bottom: 1px solid #aaa; }
.attrs, .primary { display: flex; align-items: center; background: linear-gradient(#fafafa, #e2e4e1); }
.attrs { width: 340px; }
.first { width: 12px; }
.combo { position: relative; display: block; background: #e1e1e1; border: 1px solid #b5b5b5; }
.combo::after, .task-combo::after {
  content: ""; position: absolute; right: 3px; top: 50%; margin-top: -1px;
  border: 3px solid transparent; border-top-color: #111; border-bottom: 0; pointer-events: none;
}
.combo select { display: block; width: 100%; height: 100%; padding-left: 2px; }
.level { width: 86px; height: 14px; margin-left: 4px; margin-right: 4px; font-size: 8px; color: #555; }
.attr { height: 18px; border-left: 1px solid #bbb; padding: 0 4px 0 3px; justify-content: space-between; color: #555; font-size: 8px; }
.color { width: 46px; }
.style { width: 46px; font-size: 7px; }
.weight { width: 49px; }
.globe { width: 46px; }
.prio { width: 47px; color: #999; }
.swatch { width: 13px; height: 13px; border: 1px solid #444; background: #fff; }
.primary { border-left: 2px dotted #bbb; padding-left: 3px; }
.pairs { width: 258px; display: grid; grid-template-columns: repeat(9, 1fr); }
.pairs button { justify-content: flex-start; gap: 3px; }
.singles { display: flex; gap: 3px; padding-right: 2px; }

.work { flex: 1; display: flex; min-height: 0; }
.tasks { width: 168px; flex: none; overflow: hidden; border-right: 4px solid #a9acd6; background: #eff1ee; display: flex; flex-direction: column; }
.pane-title { height: 16px; display: flex; align-items: center; justify-content: flex-end; gap: 4px; padding: 0 3px 3px 0; background: linear-gradient(90deg, #f4f8fb, #c3d7ea); }
.pane-title svg { width: 8px; height: 9px; }
.task-combo { position: relative; display: block; height: 17px; width: 161px; border: 1px solid #aaa; border-left: 0; border-radius: 0 3px 3px 0; background: #fff; font: 8px/15px "DejaVu Sans", sans-serif; }
.task-combo::after { right: 6px; }
.task-combo select { width: 146px; height: 15px; border-right: 1px solid #bbb; }
.task-tools { width: 150px; height: 29px; margin-left: -1px; padding-top: 3px; display: grid; grid-template-columns: repeat(8, 1fr); }
.task-tools svg { width: 18px; height: 18px; font-size: 7px; fill: #666; }
.task-tools svg path:not([stroke]):not([fill]) { stroke: #666; stroke-width: 1px; fill: none; }
.panels { display: flex; flex-direction: column; justify-content: space-between; font: 7px/14px "DejaVu Sans", sans-serif; color: #3a3040; }
.upper { height: 91px; }
.lower { height: 147px; margin-top: 6px; }
.panel { height: 16px; width: 162px; padding-right: 6px; justify-content: space-between; background: linear-gradient(#e9ebe9, #cfd1cf); border: 1px solid #b5b7b5; border-left: 0; border-radius: 0 3px 3px 0; }
.panel svg { width: 8px; height: 7px; }
.drawing-head { height: 17px; margin-top: 2px; padding-right: 7px; display: flex; align-items: center; justify-content: space-between; background: linear-gradient(#e8f5fe, #b5dcf8); font: bold 7px/14px "DejaVu Sans", sans-serif; }
.drawing-head svg { width: 46px; height: 10px; }
.drawing-tools { background: #fff; padding-top: 1px; height: 217px; }
.grp { width: 166px; margin-left: -8px; padding-right: 16px; border-bottom: 1px solid #bbb; display: grid; grid-template-columns: repeat(8, 1fr); }
.grp:last-child { border-bottom: 0; }
.grp button { height: 19px; }
.grp button > svg { width: 16px; height: 16px; }
.sel { background: #f6c67c; border: 1px solid #b98a48; }

.view { flex: 1; min-width: 0; display: flex; flex-direction: column; }
.view-title { height: 20px; flex: none; display: flex; align-items: center; gap: 7px; padding: 5px 0 0 2px; background: linear-gradient(#98b1d0, #b5cced); font: 8px/12px "DejaVu Sans", sans-serif; overflow: hidden; }
.view-title svg { width: 8px; height: 9px; }
.capt { margin-left: auto; margin-right: -14px; display: flex; gap: 2px; }
.capt button { width: 21px; height: 12px; border: 1px solid #6b83a8; border-radius: 2px; background: #bdd2ec; }
.capt svg { width: 19px; height: 12px; }
.view-tools { height: 16px; flex: none; display: flex; align-items: center; background: #efefef; }
.view-tools button { width: 15px; }
.view-tools button svg { width: 13px; height: 13px; }
.view-tools .nar { width: 10px; }
.view-tools hr { width: 1px; height: 13px; border: 0; margin: 0 1px; background: #aaa; }
.canvas { position: relative; flex: 1; background: #000; overflow: hidden; }
.scene { position: absolute; left: 0; top: 0; }

.dlg { position: absolute; background: #f0f1ef; }
.dlg-title { background: #fff; color: #999; display: flex; align-items: center; font: 8px/12px "DejaVu Sans", sans-serif; }
.place { left: 1px; top: 59px; width: 151px; height: 87px; }
.place .dlg-title { height: 17px; padding: 0 11px 0 3px; gap: 4px; }
.place .dlg-title svg { width: 9px; height: 12px; }
.place .dlg-title .win3 { width: 70px; height: 9px; margin-left: auto; }
.fields { display: grid; grid-template-columns: 60px 52px; grid-auto-rows: 12px; column-gap: 4px; padding-top: 3px; align-items: center; text-align: right; }
.fields .combo { height: 11px; text-align: left; }
.fields .combo select { line-height: 9px; }
.fields input { width: 52px; height: 11px; border: 1px solid #aab1cf; padding-left: 3px; color: #888; background: #f2f3f5; }
.off { color: #999; }
.join { display: flex; align-items: center; gap: 3px; margin: 1px 0 0 9px; }
.join input { width: 9px; height: 9px; border: 1px solid #444; background: #fff; display: grid; place-items: center; }
.join input::before { content: ""; width: 5px; height: 3px; border: solid #222; border-width: 0 0 1px 1px; transform: rotate(-45deg); }
.more { margin: 4px 13px 0 auto; }

.keyin { right: 0; top: 21px; width: 301px; height: 43px; }
.keyin .dlg-title { height: 20px; padding-left: 5px; gap: 4px; }
.keyin .dlg-title svg { width: 11px; height: 11px; }
.keyrow { display: flex; align-items: center; padding: 4px 4px 0; }
.keyrow input { flex: 1; height: 13px; background: #fff; border: 1px solid #999; }
.drop { width: 13px; height: 13px; border: 1px solid #aaa; background: #e2e2e2; }
.drop svg { width: 8px; height: 8px; }
.enter { margin-left: 7px; }
.enter svg { width: 14px; height: 14px; }

.toggles { left: 62px; top: 322px; width: 79px; height: 42px; }
.toggles .dlg-title { height: 20px; padding-left: 5px; justify-content: space-between; }
.x { width: 13px; height: 13px; background: #e4e4e4; margin-right: 1px; }
.tog-row { display: flex; justify-content: space-around; padding: 3px 1px 0 2px; }
.tog-row button > svg { width: 18px; height: 16px; }

.snap { right: 0; top: 365px; width: 181px; height: 42px; overflow: hidden; }
.snap .dlg-title { height: 19px; padding-left: 5px; }
.snap-row { display: flex; align-items: center; padding: 2px 0 0 2px; width: 192px; }
.snap-row button { width: 19px; height: 19px; }
.snap-row button > svg { width: 16px; height: 16px; }
.snap-row hr { width: 1px; height: 17px; margin: 0 1px; border: 0; background: #bbb; }
.snap .sel { border-color: #6b87b5; }
.snap .dark { background: #d9a05e; }

.rec { right: 148px; bottom: 5px; width: 240px; height: 50px; background: #f5f6f7; }
.rec, .pointer { position: absolute; }
.rec-title { height: 21px; background: #1f2a38; color: #eee; display: flex; align-items: center; justify-content: space-between; padding: 0 7px 0 5px; font: 8px/12px "Liberation Sans", "Noto Sans CJK SC", sans-serif; }
.rec-title > svg { width: 18px; height: 16px; }
.rec-title span { position: relative; z-index: 1; margin-right: 6px; }
.rec-title button svg { width: 9px; height: 9px; }
.rec-row { height: 29px; display: flex; align-items: center; padding-left: 5px; }
.rec-row button { width: 18px; }
.rec-row button svg { width: 18px; height: 18px; }
.rec-row button + button { margin-left: 10px; }
.rec-row hr { width: 1px; height: 22px; margin: 0 7px 0 6px; border: 0; background: #e2e4e6; }
.rec-row hr + button { margin-left: 4px; }
.rec-row .nar { width: 6px; }
.rec-row .nar .ar { border-width: 2px 2px 0; }
.rec-row .nar, .rec-row .nar + button { margin-left: 8px; }
.pointer { left: 132px; top: -5px; width: 34px; height: 34px; }
```
